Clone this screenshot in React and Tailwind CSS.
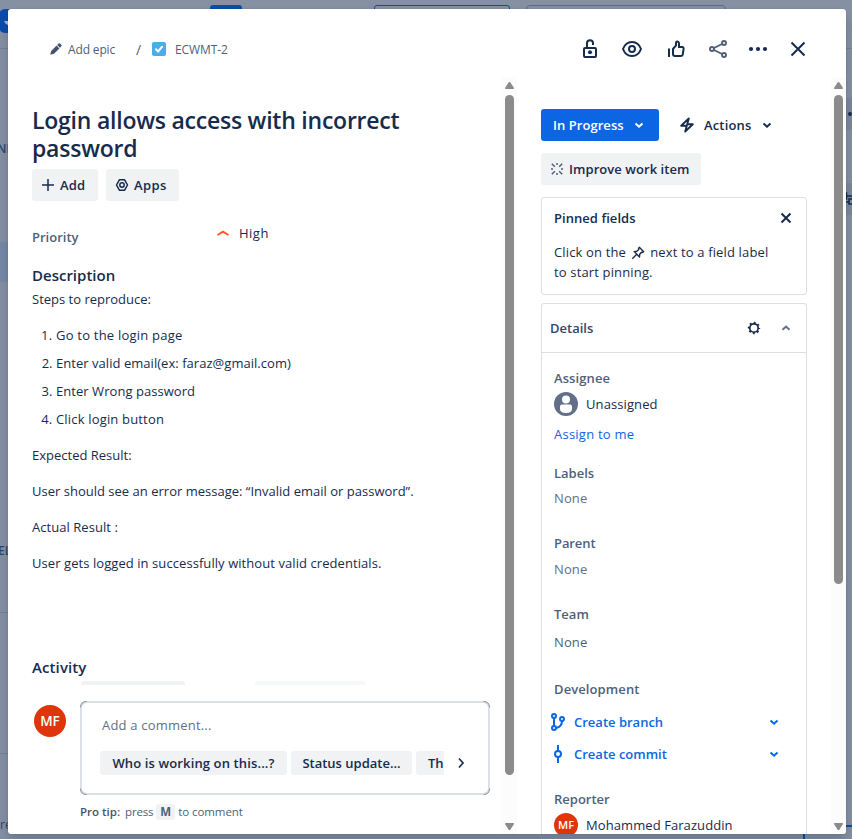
import React from "react";

const Chevron = ({ className = "", d = "M4.5 6.5 8 9.7l3.5-3.2", w = 2 }) => (
  <svg viewBox="0 0 16 16" className={`size-4 shrink-0 ${className}`} fill="none" stroke="currentColor" strokeWidth={w}>
    <path d={d} />
  </svg>
);

function Scrollbar({ thumb }) {
  return (
    <div className="flex w-[15px] shrink-0 flex-col items-center bg-[#fcfcfc] pt-[5px] pb-[4px]">
      <svg viewBox="0 0 9 7" className="h-[7px] w-[9px] shrink-0" fill="#8b8b8b"><path d="M4.5 0q.6 0 1 .6L9 6q0 1-.8 1H.8Q0 7 0 6L3.500.6Q3.900 0 4.500 0Z" /></svg>
      <div className={`mt-[6px] w-[9px] shrink-0 rounded-full bg-[#8b8b8b] ${thumb}`} />
      <svg viewBox="0 0 9 7" className="mt-auto h-[7px] w-[9px] shrink-0" fill="#8b8b8b"><path d="M4.500 7q.6 0 1-.6L9 1q0-1-.8-1H.8Q0 0 0 1l3.500 5.400q.4.6 1 .6Z" /></svg>
    </div>
  );
}

function Header() {
  return (
    <header className="flex h-[68px] shrink-0 items-center pt-[12px] pl-[41px] pr-[36px] text-[#172b4d]">
      <div className="flex items-center text-[12px] leading-4 text-[#505f79]">
        <svg viewBox="0 0 12 12" className="ml-[1px] size-3" fill="#44546f"><path d="M.2 11.800 1.200 8 6.600 2.600 9.400 5.400 4 10.800ZM7.200 2 8.700.6q.7-.7 1.400 0l1.300 1.300q.7.700 0 1.400L10 4.800Z" /></svg>
        <span className="ml-[6px] w-[68px] pt-[2px] tracking-[-0.15px]">Add epic</span>
        <span className="w-[16px] pt-px text-[14px]">/</span>
        <span className="flex size-[14px] items-center justify-center rounded-[2px] bg-[#4bade8]">
          <svg viewBox="0 0 14 14" className="size-[14px]" fill="none" stroke="white" strokeWidth="2" strokeLinecap="round"><path d="m4 7.300 2.100 2.200L10 4.800" /></svg>
        </span>
        <span className="ml-[9px] pt-[2px] tracking-[-0.1px]">ECWMT-2</span>
      </div>
      <div className="ml-auto flex items-center">
        <svg viewBox="0 0 24 24" className="mr-[18px] size-6" fill="none" stroke="currentColor" strokeWidth="2"><rect x="6" y="11" width="12" height="9" rx="1" /><path d="M9 11V6.300a3 3 0 0 1 6 0V8" /><circle cx="12" cy="15.300" r="2" fill="currentColor" stroke="none" /></svg>
        <svg viewBox="0 0 24 24" className="mr-[20px] size-6" fill="none" stroke="currentColor" strokeWidth="2"><path d="M3 12c1.500-4 4.800-7 9-7s7.500 3 9 7c-1.500 4-4.800 7-9 7s-7.500-3-9-7Z" /><circle cx="12" cy="12" r="3" /></svg>
        <svg viewBox="0 0 24 24" className="mr-[18px] size-6" fill="none" stroke="currentColor" strokeWidth="2"><path d="M5 11.500V20M9 12l3-3.500V5.800q0-1.300 1.500-1.300 1.500.2 1.500 2V10h3q1.800 0 1.600 1.600l-.8 5.800q-.2 1.600-1.800 1.600h-6q-2 0-2-2Z" /></svg>
        <svg viewBox="0 0 24 24" className="mr-[16px] size-6 text-[#505f79]" fill="none" stroke="currentColor" strokeWidth="1.900"><circle cx="6" cy="12" r="2" /><circle cx="18" cy="6" r="2" /><circle cx="18" cy="18" r="2" /><path d="m8 11 8-4M8 13l8 4" /></svg>
        <svg viewBox="0 0 24 24" className="mr-[16px] size-6" fill="currentColor"><circle cx="5" cy="12" r="2.100" /><circle cx="12" cy="12" r="2.100" /><circle cx="19" cy="12" r="2.100" /></svg>
        <svg viewBox="0 0 24 24" className="size-6" fill="none" stroke="currentColor" strokeWidth="2"><path d="m5.500 5.500 13 13M18.500 5.500l-13 13" /></svg>
      </div>
    </header>
  );
}

function CommentBox() {
  return (
    <div className="mt-4 flex">
      <div className="mt-1 ml-[2px] flex size-8 shrink-0 items-center justify-center rounded-full bg-[#de350b] text-[13.5px] font-semibold text-white">MF</div>
      <div className="relative ml-[14px] h-[94px] w-[410px] rounded-[7px] border-2 border-[#dcdfe4] px-[18px] pt-[12px]">
        <svg viewBox="0 0 410 94" className="absolute -top-[2px] -left-[2px] h-[94px] w-[410px]" fill="none" stroke="#8c9099">
          <path d="M.5 6.500Q.5.500 6.500.5M403.500.5q6 0 6 6M409.500 87.500q0 6-6 6M6.500 93.500q-6 0-6-6" />
        </svg>
        <p className="pl-[2px] leading-5 tracking-[0.2px] text-[#626f86]">Add a comment...</p>
        <div className="mt-[16px] flex items-center">
          <div className="flex w-[344px] gap-1 overflow-hidden font-semibold">
            <span className="flex h-6 w-[187px] shrink-0 items-center justify-center rounded-[3px] bg-[#f1f2f4] tracking-[0.13px]">Who is working on this...?</span>
            <span className="flex h-6 w-[121px] shrink-0 items-center justify-center rounded-[3px] bg-[#f1f2f4]">Status update...</span>
            <span className="flex h-6 w-7 shrink-0 items-center rounded-l-[3px] bg-[#f1f2f4] pl-3">Th</span>
          </div>
          <Chevron className="ml-[9px]" d="m6 3.500 4 4.500-4 4.500" w={1.7} />
        </div>
      </div>
    </div>
  );
}

function IssueBody() {
  return (
    <main className="flex w-[494px] shrink-0 flex-col pt-[29px] pl-6">
      <h1 className="w-[440px] text-[23px] leading-7 font-semibold tracking-[-0.23px]">Login allows access with incorrect password</h1>
      <div className="mt-[7px] flex gap-2 font-semibold">
        <div className="flex h-8 w-[66px] items-center rounded-[3px] bg-[#f1f2f4] pl-[9px]">
          <svg viewBox="0 0 14 14" className="mr-[5px] size-[14px]" stroke="currentColor" strokeWidth="1.500"><path d="M7 1v12M1 7h12" /></svg><span className="tracking-[0.1px]">Add</span>
        </div>
        <div className="flex h-8 w-[73px] items-center rounded-[3px] bg-[#f1f2f4] pl-[9px]">
          <svg viewBox="0 0 14 14" className="mr-[5px] size-[14px]" fill="none" stroke="currentColor" strokeWidth="1.500"><path d="M4.500 1.700h5L12.500 7l-3 5.300h-5L1.500 7Z" strokeLinejoin="round" /><circle cx="7" cy="7" r="2.200" /></svg><span className="tracking-[0.4px]">Apps</span>
        </div>
      </div>
      <div className="mt-[22px] flex h-7 leading-5">
        <span className="mt-1 w-[183px] font-semibold text-[#505f79]">Priority</span>
        <Chevron className="mt-[2px] text-[#ff5630]" d="M2.500 10 8 6.700l5.500 3.300" w={2} />
        <span className="ml-2 tracking-[0.5px]">High</span>
      </div>
      <h2 className="mt-[14px] text-[15px] leading-5 font-semibold">Description</h2>
      <div className="mt-1 leading-5">
        <p>Steps to reproduce:</p>
        <ol className="mt-4 flex list-decimal flex-col gap-2 pl-6">
          <li className="tracking-[0.22px]">Go to the login page</li>
          <li className="tracking-[0.04px]">Enter valid email(ex: faraz@gmail.com)</li>
          <li className="tracking-[0.05px]">Enter Wrong password</li>
          <li className="tracking-[0.17px]">Click login button</li>
        </ol>
        <p className="mt-4">Expected Result:</p>
        <p className="mt-4 tracking-[0.01px]">User should see an error message: “Invalid email or password”.</p>
        <p className="mt-4 tracking-[0.05px]">Actual Result :</p>
        <p className="mt-4 tracking-[0.07px]">User gets logged in successfully without valid credentials.</p>
      </div>
      <h2 className="mt-[84px] text-[15px] leading-5 font-semibold tracking-[0.1px]">Activity</h2>
      <div className="mt-[4px] flex h-1 gap-[70px] pl-[49px]">
        <div className="w-[104px] rounded-t-[3px] bg-[#f1f2f4]" />
        <div className="w-[111px] rounded-t-[3px] bg-[#f7f8f9]" />
      </div>
      <CommentBox />
      <p className="mt-[8px] flex items-center pl-12 text-[11.5px] leading-[18px] text-[#505f79]">
        <b className="font-semibold text-[#44546f]">Pro tip:</b>
        <span className="ml-[5px] tracking-[-0.2px]">press</span>
        <span className="mx-[3px] flex h-4 w-[19px] items-center justify-center rounded-[3px] bg-[#f1f2f4] font-bold">M</span>
        <span className="tracking-[-0.08px]">to comment</span>
      </p>
    </main>
  );
}

const Label = ({ className = "", children }) => <p className={`leading-5 font-semibold text-[#505f79] ${className}`}>{children}</p>;

function DevLink({ children, icon }) {
  return (
    <div className="-ml-1 flex h-8 w-[232px] items-center font-semibold text-[#0c66e4]">
      <svg viewBox="0 0 16 20" className="mr-2 h-5 w-4" fill="none" stroke="currentColor" strokeWidth="2">{icon}</svg>
      {children}
      <Chevron className="ml-auto" />
    </div>
  );
}

function Sidebar() {
  return (
    <aside className="ml-6 flex w-[266px] shrink-0 flex-col pt-8">
      <div className="flex h-8 shrink-0 items-center font-semibold">
        <div className="flex h-8 w-[118px] items-center rounded-[3px] bg-[#0c66e4] pl-3 text-white">
          <span className="tracking-[0.05px]">In Progress</span><Chevron className="ml-auto mr-3" />
        </div>
        <svg viewBox="0 0 16 16" className="ml-5 size-4" fill="none" stroke="currentColor" strokeWidth="1.900" strokeLinejoin="round"><path d="M9.800 1.400 2.200 8.800h5.600L6.200 14.600 13.800 7.200H8.200Z" /></svg>
        <span className="ml-[9px] tracking-[0.15px]">Actions</span>
        <Chevron className="ml-2" />
      </div>
      <div className="mt-3 flex h-8 w-[160px] shrink-0 items-center rounded-[3px] bg-[#f1f2f4] pl-[9px] font-semibold">
        <svg viewBox="0 0 14 14" className="mr-[5px] size-[14px] text-[#505f79]" stroke="currentColor" strokeWidth="1.500"><path d="M7 1v2M7 11v2M1 7h2M11 7h2M1.800 1.800l3 3M9.200 9.200l3 3M12.200 1.800l-3 3M4.800 9.200l-3 3" /></svg>
        <span className="tracking-[0.06px]">Improve work item</span>
      </div>
      <section className="mt-3 h-[98px] shrink-0 rounded-[3px] border border-[#dcdfe4] px-3 pt-[10px]">
        <div className="flex items-center justify-between leading-5 font-semibold">
          <span className="tracking-[0.05px]">Pinned fields</span>
          <svg viewBox="0 0 16 16" className="size-4" fill="none" stroke="currentColor" strokeWidth="2"><path d="m3.500 3.500 9 9M12.500 3.500l-9 9" /></svg>
        </div>
        <p className="mt-[14px] leading-5 tracking-[0.15px]">
          Click on the{" "}
          <svg viewBox="0 0 16 16" className="-mt-[1px] mr-[1px] inline size-4" fill="none" stroke="currentColor" strokeWidth="1.400" strokeLinejoin="round"><path d="M9.300 2.300 13.700 6.700 12.500 7.500 11.500 7.200 9.700 9.300 9.500 12 4.200 6.600 6.800 6.300 8.800 4.500 8.500 3.400ZM6.500 9.500 2.300 13.700" /></svg>{" "}
          next to a field label<br />to start pinning.
        </p>
      </section>
      <section className="mt-2 min-h-0 flex-1 rounded-t-[3px] border border-b-0 border-[#dcdfe4]">
        <div className="flex h-[49px] items-center border-b border-[#dcdfe4] pl-2 pr-3 font-semibold">
          <span className="text-[#344563]">Details</span>
          <svg viewBox="0 0 16 16" className="mr-4 ml-auto size-4" fill="none" stroke="currentColor"><circle cx="8" cy="8" r="4.200" strokeWidth="1.700" /><circle cx="8" cy="8" r="5.300" strokeWidth="1.800" strokeDasharray="1.900 2.263" strokeDashoffset=".95" /></svg>
          <Chevron className="text-[#626f86]" d="M4.500 9.700 8 6.500l3.500 3.200" />
        </div>
        <div className="px-3 pt-[15px]">
          <Label className="tracking-[0.1px]">Assignee</Label>
          <div className="mt-1 flex h-6 items-center">
            <svg viewBox="0 0 24 24" className="mr-2 size-6"><circle cx="12" cy="12" r="12" fill="#626f86" /><circle cx="12" cy="7.500" r="4" fill="white" /><path d="M6 14.500Q6 12.500 8 12.500h8q2 0 2 2V17q0 4-6 4t-6-4Z" fill="white" /></svg>
            <span className="tracking-[0.1px]">Unassigned</span>
          </div>
          <p className="mt-2 leading-5 tracking-[0.24px] text-[#0c66e4]">Assign to me</p>
          <Label className="mt-[19px]">Labels</Label>
          <p className="mt-[5px] leading-5 tracking-[0.1px] text-[#626f86]">None</p>
          <Label className="mt-[25px] tracking-[-0.1px]">Parent</Label>
          <p className="mt-[6px] leading-5 tracking-[0.1px] text-[#626f86]">None</p>
          <Label className="mt-[25px]">Team</Label>
          <p className="mt-[8px] leading-5 tracking-[0.1px] text-[#505f79]">None</p>
          <Label className="mt-[27px] tracking-[0.1px]">Development</Label>
          <div className="mt-[7px]">
            <DevLink icon={<><circle cx="4" cy="4" r="2" /><circle cx="4" cy="16" r="2" /><circle cx="12" cy="7" r="2" /><path d="M4 6v8M12 9q0 6-6 7" /></>}>Create branch</DevLink>
            <DevLink icon={<><circle cx="8" cy="10" r="3" /><path d="M8 1v6M8 13v6" /></>}>Create commit</DevLink>
          </div>
          <Label className="mt-[19px]">Reporter</Label>
          <div className="mt-1 flex h-6 items-center">
            <span className="mr-2 flex size-6 items-center justify-center rounded-full bg-[#de350b] text-[11px] font-semibold text-white">MF</span>
            <span className="tracking-[0.08px]">Mohammed Farazuddin</span>
          </div>
        </div>
      </section>
    </aside>
  );
}

function Backdrop() {
  return (
    <div className="absolute inset-0 bg-[#8590a2] text-[12px] font-semibold text-[#2b4470]">
      <div className="absolute top-[9px] -left-[1px] h-6 w-8 rounded-[6px] bg-[#0b4cad]" />
      <svg viewBox="0 0 4 5" className="absolute top-[20px] left-1 h-[5px] w-1" fill="#a9b5c9"><path d="M0 1h4v4Q1 4 0 1Z" /></svg>
      <div className="absolute top-12 left-0 h-px w-full bg-[#76829a]" />
      <div className="absolute top-[5px] left-[210px] h-6 w-8 rounded-[3px] bg-[#0b4cad]" />
      <div className="absolute top-[5px] left-[374px] h-6 w-[136px] rounded-[3px] border border-[#0b4cad]" />
      <div className="absolute top-[5px] left-[526px] h-6 w-[200px] rounded-[4px] border border-[#5b6a86]" />
      <span className="absolute top-[141px] -left-[3px] leading-4">NI</span>
      <div className="absolute top-[242px] left-0 h-10 w-4 bg-[#7689a6]" />
      <span className="absolute top-[543px] -left-[2px] leading-4">EL</span>
      <div className="absolute top-[612px] left-0 h-px w-4 bg-[#76829a]" />
      <div className="absolute top-[753px] left-0 h-px w-4 bg-[#76829a]" />
      <span className="absolute top-[817px] left-0 leading-4 font-normal">re</span>
      <div className="absolute top-[98px] right-0 h-8 w-2 bg-[#7d889d]" />
      <div className="absolute top-[112px] right-0 size-1 rounded-full bg-[#172b4d]" />
      <div className="absolute top-[183px] right-0 h-8 w-2 bg-[#7d889d]" />
      <svg viewBox="0 0 8 14" className="absolute top-[191px] right-0 h-[14px] w-2" fill="none" stroke="#172b4d" strokeWidth="1.500"><path d="M-1 2h3.500v6H-1M2.500 5H8M9 8H5v5h4M0 11h5" /></svg>
      <div className="absolute top-[825px] left-[803px] h-6 w-16 border-2 border-[#0b4cad]" />
    </div>
  );
}

export default function App() {
  return (
    <div className="relative h-[839px] w-[852px] overflow-hidden font-['Open_Sans','Noto_Sans',sans-serif] text-[13px] leading-5 text-[#172b4d]">
      <Backdrop />
      <div className="absolute top-[9px] left-2 flex h-[825px] w-[838px] flex-col overflow-hidden rounded-[3px] bg-white shadow-[0_8px_12px_rgba(9,30,66,0.2),0_0_1px_rgba(9,30,66,0.3)]">
        <Header />
        <div className="flex min-h-0 flex-1">
          <IssueBody />
          <Scrollbar thumb="h-[680px]" />
          <Sidebar />
          <div className="ml-auto flex"><Scrollbar thumb="h-[489px]" /></div>
        </div>
      </div>
    </div>
  );
}
